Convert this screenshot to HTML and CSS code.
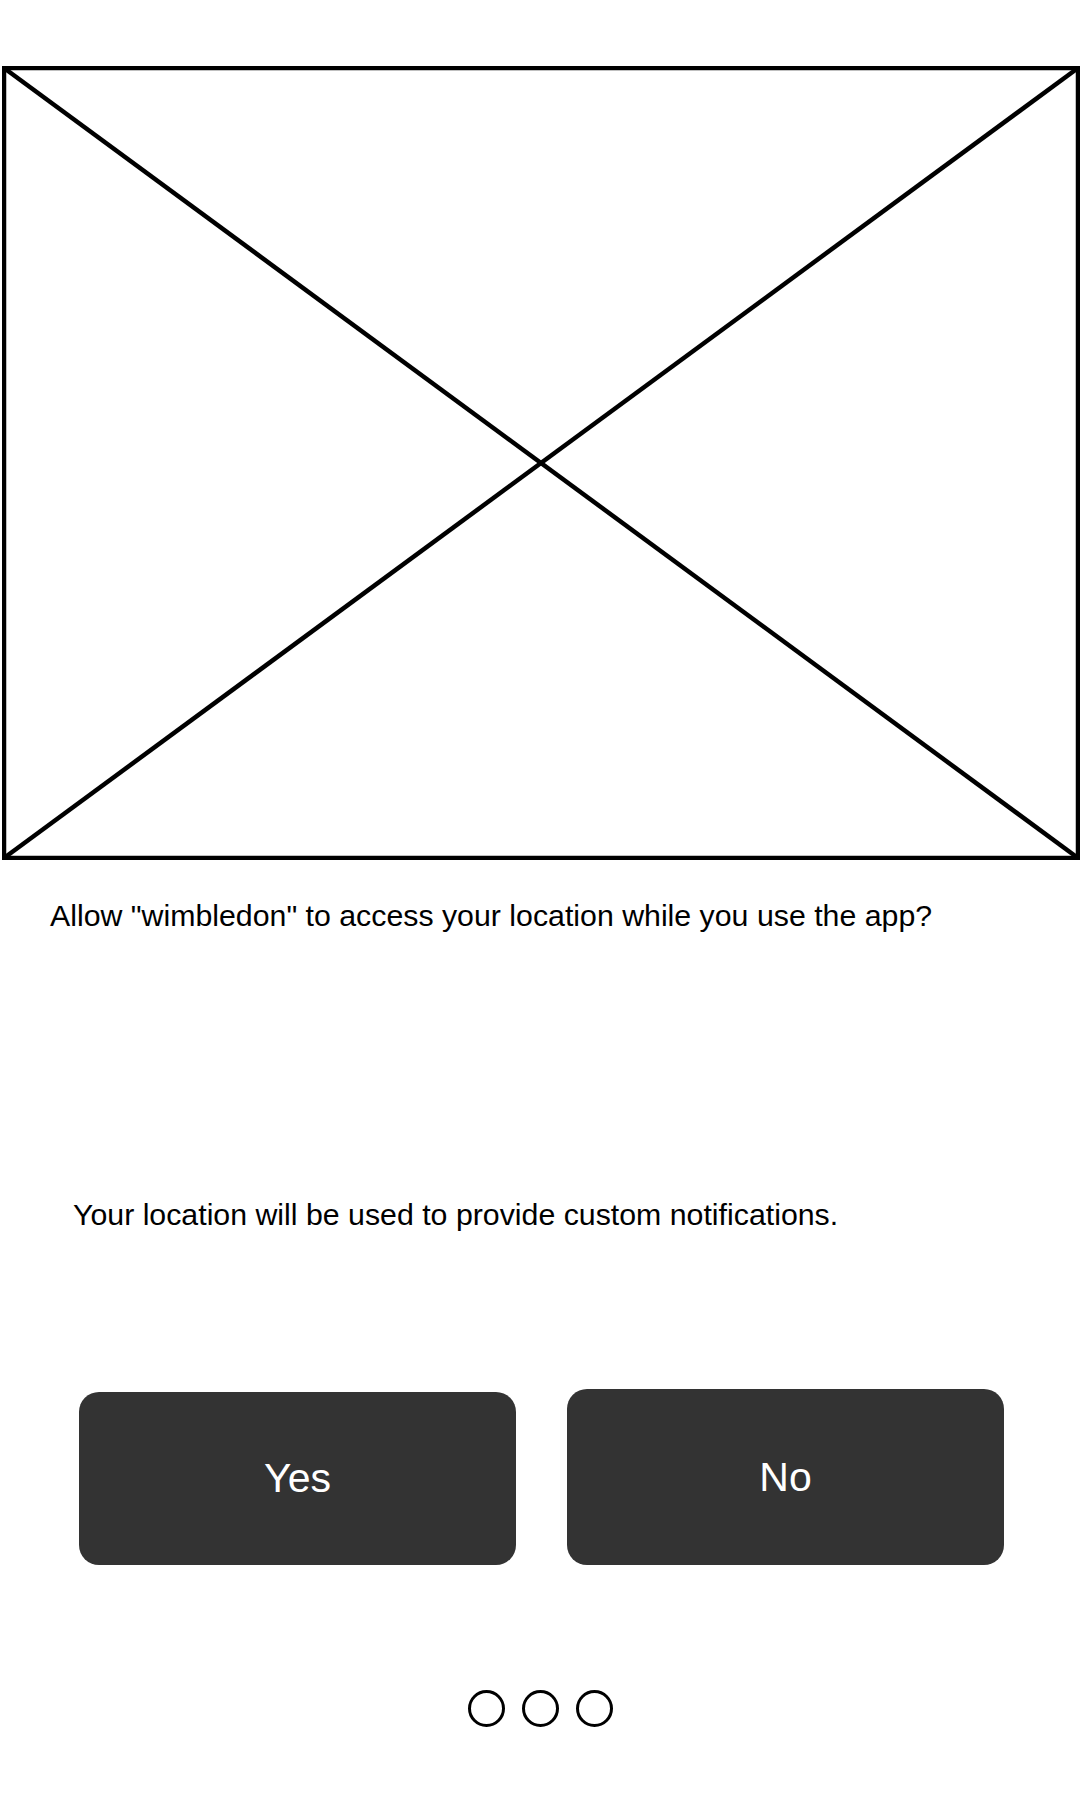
FILE: index.html
```html
<!DOCTYPE html>
<html lang="en">
<head>
  <meta charset="UTF-8">
  <meta name="viewport" content="width=device-width, initial-scale=1.0">
  <title>Location Permission</title>
  <link rel="stylesheet" href="styles.css">
</head>
<body>

  <!-- Image placeholder -->
  <div class="placeholder">
    <svg viewBox="0 0 1078 794" width="1078" height="794" preserveAspectRatio="none">
      <rect x="2" y="2" width="1074" height="790" fill="none" stroke="#000" stroke-width="4.5"/>
      <line x1="2" y1="2" x2="1076" y2="792" stroke="#000" stroke-width="4.5"/>
      <line x1="1076" y1="2" x2="2" y2="792" stroke="#000" stroke-width="4.5"/>
    </svg>
  </div>

  <p class="question">Allow "wimbledon" to access your location while you use the app?</p>

  <p class="note">Your location will be used to provide custom notifications.</p>

  <div class="actions">
    <button class="btn btn-yes">Yes</button>
    <button class="btn btn-no">No</button>
  </div>

  <div class="dots">
    <span class="dot"></span>
    <span class="dot"></span>
    <span class="dot"></span>
  </div>

</body>
</html>
```

FILE: styles.css
```css
* {
  margin: 0;
  padding: 0;
  box-sizing: border-box;
}

body {
  width: 1080px;
  background-color: #ffffff;
  color: #000;
  font-family: 'Liberation Sans', Arial, sans-serif;
}

.placeholder {
  margin-top: 66px;
  padding-left: 2px;
}

.placeholder svg {
  display: block;
}

.question,
.note {
  font-size: 30.3px;
  line-height: 34px;
}

.question {
  margin-top: 39px;
  padding-left: 50px;
}

.note {
  margin-top: 265px;
  padding-left: 73px;
}

.actions {
  display: flex;
  align-items: flex-end;
  gap: 51px;
  margin-top: 157px;
  padding-left: 79px;
}

.btn {
  width: 437px;
  border: none;
  border-radius: 20px;
  background-color: #333333;
  color: #ffffff;
  font-family: 'Liberation Sans', Arial, sans-serif;
  font-size: 41px;
  cursor: pointer;
}

.btn-yes {
  height: 173px;
}

.btn-no {
  height: 176px;
}

.dots {
  display: flex;
  justify-content: center;
  gap: 17px;
  margin-top: 125px;
}

.dot {
  width: 37px;
  height: 37px;
  border: 3px solid #000;
  border-radius: 50%;
}
```
